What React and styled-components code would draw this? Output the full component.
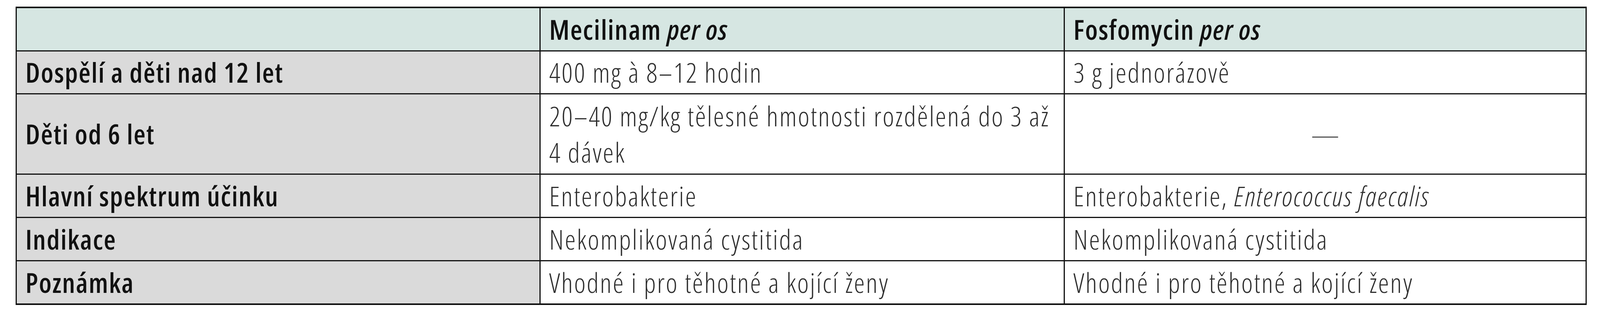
import { Fragment } from 'react'
import styled, { createGlobalStyle } from 'styled-components'

const GlobalStyle = createGlobalStyle`
    html, body {
        margin: 0;
        padding: 0;
        background: #ffffff;
    }
    body {
        font-family: "Open Sans", "Noto Sans", "Liberation Sans", sans-serif;
    }
`

const Page = styled.div`
    padding: 17px 0 0 40px;
`

const Grid = styled.div`
    display: grid;
    grid-template-columns: 1338px 1339px 1333px;
    grid-template-rows: 108px 107px 203px 108px 108px 108px;
    gap: 3px;
    padding: 4px 3px;
    background: #111111;
    width: max-content;
`

const Cell = styled.div`
    display: flex;
    align-items: center;
    justify-content: ${p => (p.$center ? 'center' : 'flex-start')};
    padding: 0 22px;
    background: #ffffff;
    font-size: 70px;
    line-height: 93px;
    font-weight: 350;
    font-stretch: 75%;
    letter-spacing: 3.1px;
    color: #2e2e2e;
    white-space: nowrap;
`

const HeadCell = styled(Cell)`
    background: #d6e6e2;
    font-weight: 600;
    letter-spacing: 2px;
    color: #111111;
`

const LabelCell = styled(Cell)`
    background: #dadada;
    font-weight: 600;
    letter-spacing: 2px;
    color: #111111;
`

const Dash = styled.span`
    color: #555555;
    font-size: 72px;
    letter-spacing: 0;
`

const rows = [
    {
        label: 'Dospělí a děti nad 12 let',
        a: '400 mg à 8–12 hodin',
        b: '3 g jednorázově',
    },
    {
        label: 'Děti od 6 let',
        a: (
            <>
                20–40 mg/kg tělesné hmotnosti rozdělená do 3 až<br />4 dávek
            </>
        ),
        b: <Dash>—</Dash>,
        center: true,
    },
    {
        label: 'Hlavní spektrum účinku',
        a: 'Enterobakterie',
        b: (
            <>
                Enterobakterie, <i>Enterococcus faecalis</i>
            </>
        ),
    },
    {
        label: 'Indikace',
        a: 'Nekomplikovaná cystitida',
        b: 'Nekomplikovaná cystitida',
    },
    {
        label: 'Poznámka',
        a: 'Vhodné i pro těhotné a kojící ženy',
        b: 'Vhodné i pro těhotné a kojící ženy',
    },
]

const App = () => {
    return (
        <>
            <GlobalStyle />
            <Page>
                <Grid>
                    <HeadCell />
                    <HeadCell>
                        <span>
                            Mecilinam <i>per os</i>
                        </span>
                    </HeadCell>
                    <HeadCell>
                        <span>
                            Fosfomycin <i>per os</i>
                        </span>
                    </HeadCell>
                    {rows.map(row => (
                        <Fragment key={row.label}>
                            <LabelCell>{row.label}</LabelCell>
                            <Cell>
                                <span>{row.a}</span>
                            </Cell>
                            <Cell $center={row.center}>
                                <span>{row.b}</span>
                            </Cell>
                        </Fragment>
                    ))}
                </Grid>
            </Page>
        </>
    )
}

export default App
